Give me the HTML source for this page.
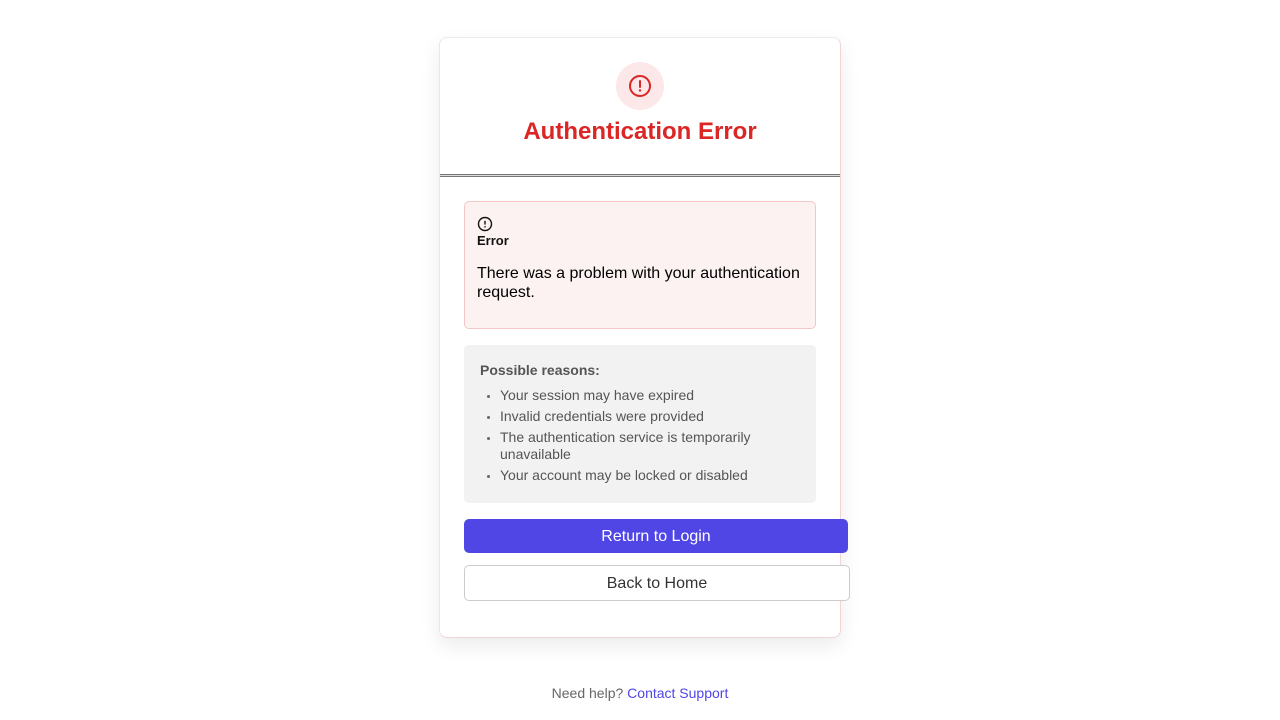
<!DOCTYPE html>
<html><head><meta charset="utf-8"><style>
*{box-sizing:border-box}
body{margin:0;background:#fff;font-family:"Liberation Sans",sans-serif;width:1280px;height:720px;position:relative}
.card{position:absolute;left:439px;top:37px;width:402px;height:601px;border:1px solid #f3d4d4;border-top-color:#ececec;border-left-color:#e8e8e8;border-radius:8px;box-shadow:0 8px 20px rgba(0,0,0,0.08);background:#fff}
.iconc{position:absolute;left:176px;top:24px;width:48px;height:48px;border-radius:50%;background:#fce8e8}
h1{position:absolute;left:0;width:100%;top:80px;margin:0;text-align:center;color:#dc2626;font-size:24px;font-weight:bold}
.hr{position:absolute;left:0;top:136px;width:400px;height:3px;border-top:1px solid #777;border-bottom:1px solid #777;background:#ddd}
.err{position:absolute;left:24px;top:163px;width:352px;height:128px;background:#fdf2f2;border:1px solid #f5c6c6;border-radius:5px;padding:14px 12px}
.err .t{font-size:13px;font-weight:bold;color:#111;margin-top:1px}
.err p{margin:16px 0 0;font-size:16px;line-height:19px;color:#000}
.rs{position:absolute;left:24px;top:307px;width:352px;height:158px;background:#f2f2f2;border-radius:5px;padding:17px 16px}
.rs .h{font-size:14px;font-weight:bold;color:#555}
.rs ul{margin:9px 0 0;padding-left:20px;color:#555;font-size:14px;line-height:17px}
.rs li{margin-bottom:4px}
.rs li::marker{font-size:11px;color:#666}
.b1{position:absolute;left:24px;top:481px;width:384px;height:34px;background:#4f46e5;border-radius:5px;color:#fff;font-size:16px;text-align:center;line-height:36px}
.b2{position:absolute;left:24px;top:527px;width:386px;height:36px;border:1px solid #ccc;border-radius:5px;color:#333;font-size:16px;text-align:center;line-height:36px;background:#fff}
.foot{position:absolute;top:685px;left:0;width:1280px;text-align:center;font-size:14px;color:#666}
.foot span{color:#4f46e5}
</style></head><body>
<div class="card">
<div class="iconc"><svg width="48" height="48" viewBox="0 0 48 48"><circle cx="24" cy="24" r="10" fill="none" stroke="#dc2626" stroke-width="2"/><line x1="24" y1="19" x2="24" y2="25" stroke="#dc2626" stroke-width="2" stroke-linecap="round"/><circle cx="24" cy="28.5" r="1.2" fill="#dc2626"/></svg></div>
<h1>Authentication Error</h1>
<div class="hr"></div>
<div class="err">
<svg width="16" height="16" viewBox="0 0 16 16" style="display:block"><circle cx="8" cy="8" r="6.5" fill="none" stroke="#111" stroke-width="1.4"/><line x1="8" y1="4.8" x2="8" y2="8.6" stroke="#111" stroke-width="1.4"/><circle cx="8" cy="10.8" r="0.8" fill="#111"/></svg>
<div class="t">Error</div>
<p>There was a problem with your authentication request.</p>
</div>
<div class="rs"><div class="h">Possible reasons:</div>
<ul><li>Your session may have expired</li><li>Invalid credentials were provided</li><li>The authentication service is temporarily unavailable</li><li>Your account may be locked or disabled</li></ul></div>
<div class="b1">Return to Login</div>
<div class="b2">Back to Home</div>
</div>
<div class="foot">Need help? <span>Contact Support</span></div>
</body></html>
